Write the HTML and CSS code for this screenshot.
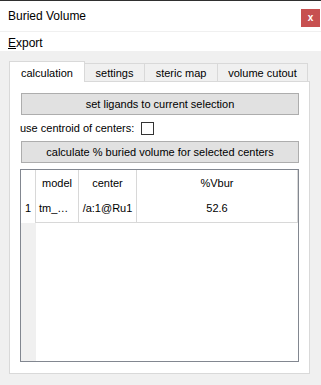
FILE: index.html
```html
<!DOCTYPE html>
<html lang="en">
<head>
  <meta charset="UTF-8">
  <title>Buried Volume</title>
  <link rel="stylesheet" href="styles.css">
</head>
<body>
  <div class="window">
    <div class="titlebar">
      <span class="title">Buried Volume</span>
      <span class="close">x</span>
    </div>
    <div class="menubar">
      <span class="menu"><u>E</u>xport</span>
    </div>

    <div class="main">
      <div class="tabs">
        <div class="tab active">calculation</div>
        <div class="tab tab-settings">settings</div>
        <div class="tab tab-steric">steric map</div>
        <div class="tab tab-cutout">volume cutout</div>
      </div>

      <div class="pane">
        <button class="wide-btn">set ligands to current selection</button>
        <label class="check-row">
          <span>use centroid of centers:</span>
          <span class="checkbox"></span>
        </label>
        <button class="wide-btn">calculate % buried volume for selected centers</button>

        <div class="table-box">
          <div class="results">
            <div class="cell corner"></div>
            <div class="cell head">model</div>
            <div class="cell head">center</div>
            <div class="cell head">%Vbur</div>

            <div class="cell row-num">1</div>
            <div class="cell data left">tm_…</div>
            <div class="cell data">/a:1@Ru1</div>
            <div class="cell data">52.6</div>
          </div>
          <div class="filler">
            <div class="row-head-fill"></div>
          </div>
        </div>
      </div>
    </div>
  </div>
</body>
</html>
```

FILE: styles.css
```css
body {
  margin: 0;
  width: 321px;
  height: 385px;
  overflow: hidden;
  background-color: #f0f0f0;
  font-family: "Liberation Sans", Arial, sans-serif;
  font-size: 11px;
  color: #000;
}

.window {
  border-top: 1px solid #2f2f2f;
}

.titlebar {
  height: 30px;
  background-color: #fff;
  display: flex;
  align-items: center;
  justify-content: space-between;
  padding-left: 8px;
  font-size: 12px;
}

.close {
  align-self: flex-start;
  margin-top: 8px;
  margin-right: 1px;
  width: 19px;
  height: 18px;
  background-color: #c75050;
  color: #fff;
  font-size: 10px;
  font-weight: bold;
  line-height: 17px;
  text-align: center;
}

.menubar {
  border-top: 1px solid #f0f0f0;
  height: 20px;
  box-sizing: border-box;
  padding: 2px 0 0 8px;
  line-height: 18px;
  background-color: #fff;
  font-size: 12px;
}

.main {
  padding: 10px 11px 0 9px;
}

/* tab strip */
.tabs {
  display: flex;
  align-items: flex-end;
  height: 20px;
}

.tab {
  box-sizing: border-box;
  height: 18px;
  padding-top: 1px;
  line-height: 16px;
  text-align: center;
  background-color: #f0f0f0;
  border-top: 1px solid #d9d9d9;
  border-right: 1px solid #d9d9d9;
}

.tab.active {
  position: relative;
  z-index: 1;
  width: 76px;
  height: 21px;
  margin-bottom: -1px;
  padding-top: 2px;
  line-height: 18px;
  background-color: #fff;
  border-left: 1px solid #d9d9d9;
}

.tab-settings { width: 60px; }
.tab-steric { width: 73px; }
.tab-cutout { width: 90px; }

.pane {
  box-sizing: border-box;
  height: 293px;
  padding: 11px 10px 0 11px;
  background-color: #fff;
  border: 1px solid #d9d9d9;
}

.wide-btn {
  display: block;
  width: 278px;
  height: 22px;
  margin: 0;
  padding: 0;
  background-color: #e1e1e1;
  border: 1px solid #adadad;
  font-family: inherit;
  font-size: 11px;
  color: #000;
}

.check-row {
  display: flex;
  align-items: center;
  height: 26px;
  margin-left: -1px;
}

.checkbox {
  width: 13px;
  height: 13px;
  box-sizing: border-box;
  margin-left: 7px;
  border: 1px solid #333;
  background-color: #fff;
}

/* results table */
.table-box {
  display: flex;
  flex-direction: column;
  box-sizing: border-box;
  width: 279px;
  height: 193px;
  margin: 6px 0 0 -1px;
  border: 1px solid #828790;
  background-color: #fff;
}

.results {
  display: grid;
  grid-template-columns: 15px 43px 58px 161px;
}

.cell {
  box-sizing: border-box;
  border-right: 1px solid #d8d8d8;
  text-align: center;
  white-space: nowrap;
  overflow: hidden;
}

.corner,
.head {
  height: 26px;
  line-height: 26px;
}

.row-num,
.data {
  height: 27px;
  line-height: 24px;
}

.data {
  border-bottom: 1px solid #d8d8d8;
}

.data.left {
  text-align: left;
  padding-left: 3px;
}

.filler {
  flex: 1;
  display: flex;
}

.row-head-fill {
  width: 15px;
  background-color: #f0f0f0;
}
```
